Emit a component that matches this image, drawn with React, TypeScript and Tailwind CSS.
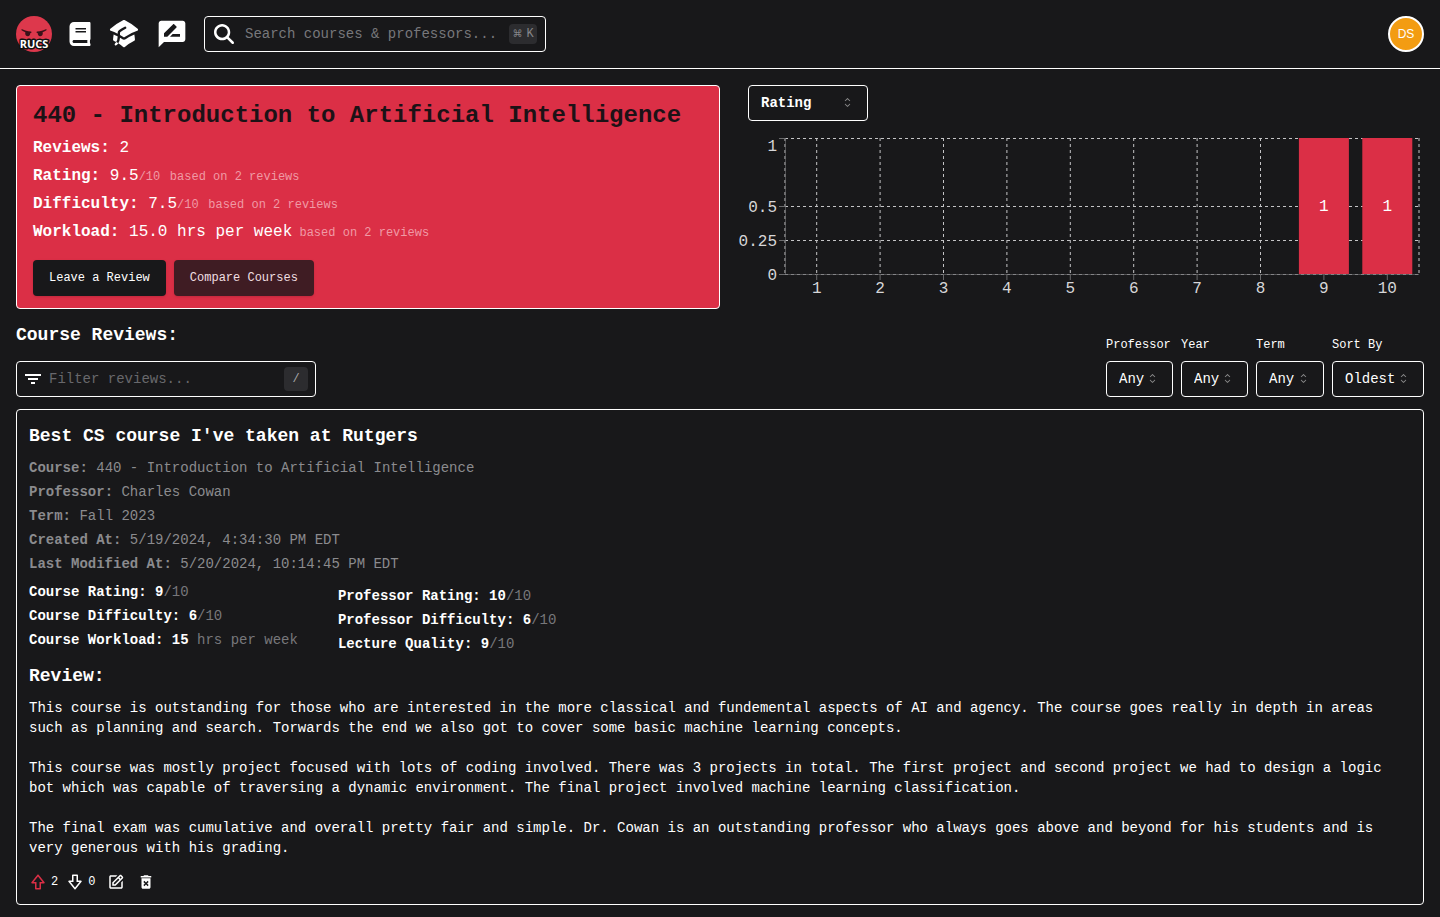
import type { ReactNode } from "react";
import { BiDownvote, BiEdit, BiFilter, BiUpvote } from "react-icons/bi";
import { FaBook } from "react-icons/fa";
import { FaMagnifyingGlass } from "react-icons/fa6";
import { HiMiniAcademicCap } from "react-icons/hi2";
import { MdDeleteForever, MdRateReview } from "react-icons/md";
import { RxCaretSort } from "react-icons/rx";

function Logo() {
  return (
    <svg viewBox="0 0 36 36" className="size-9" role="img" aria-label="RUCS home">
      <circle cx="18" cy="18" r="18" fill="#dd384c" />
      <g fill="#3a1219">
        <path d="M6.2 13.200c2.200 1.300 5.400 2 8.600 2.200.8.100 1 .6.600 1.100-.3.400-.7.700-1.200.8.200 1.500-.8 2.900-2.300 2.900s-2.800-1.300-2.700-3c0-.3.100-.6.200-.9-1.500-.5-2.900-1.200-3.800-2-.6-.6 0-1.400.6-1.100z" />
        <path d="M29.800 13.200c-2.200 1.300-5.400 2-8.600 2.200-.8.100-1 .6-.6 1.100.3.400.7.700 1.200.8-.2 1.500.8 2.900 2.300 2.900s2.800-1.300 2.700-3c0-.3-.1-.6-.2-.9 1.500-.5 2.900-1.200 3.800-2 .6-.6 0-1.400-.6-1.100z" />
      </g>
      <text
        x="18"
        y="32"
        textAnchor="middle"
        className="font-['Liberation_Sans_Narrow','Open_Sans',sans-serif] text-[11px] font-bold"
        fill="#fff"
        stroke="#111"
        strokeWidth="3"
        strokeLinejoin="round"
        paintOrder="stroke"
      >
        RUCS
      </text>
    </svg>
  );
}

function Header() {
  return (
    <header className="flex items-center justify-between border-b border-white p-4">
      <div className="flex items-center gap-4">
        <a href="#home">
          <Logo />
        </a>
        <a href="#courses" aria-label="Courses">
          <FaBook className="size-6" />
        </a>
        <a href="#professors" aria-label="Professors">
          <HiMiniAcademicCap className="size-8" />
        </a>
        <a href="#reviews" aria-label="Reviews">
          <MdRateReview className="size-8" />
        </a>
        <div className="flex h-9 w-[342px] items-center rounded border border-white pr-2 pl-[9px]">
          <FaMagnifyingGlass className="mr-[11px] size-5 shrink-0" />
          <input
            type="search"
            aria-label="Search courses and professors"
            placeholder="Search courses & professors..."
            className="min-w-0 flex-1 bg-transparent text-sm outline-none placeholder:text-[#77777b]"
          />
          <kbd className="flex h-5 w-7 shrink-0 items-center justify-center gap-1 rounded bg-[#2c2c2f] text-xs text-[#86868a]">
            <span className="font-['DejaVu_Sans',sans-serif] text-[10px]">⌘</span>K
          </kbd>
        </div>
      </div>
      <button
        type="button"
        aria-label="Account"
        className="flex size-9 items-center justify-center rounded-full border-2 border-white bg-[#f39c12] font-['Liberation_Sans',sans-serif] text-xs text-white"
      >
        DS
      </button>
    </header>
  );
}

function Stat({ label, value, outOf, note }: { label: string; value: string; outOf?: string; note?: string }) {
  return (
    <p className="leading-7">
      <b>{label}:</b> {value}
      {outOf && <span className="text-xs text-[#f09aa5]">/{outOf}</span>}
      {outOf && " "}
      {note && (
        <span className="text-xs text-[#f09aa5]">
          {!outOf && " "}
          {note}
        </span>
      )}
    </p>
  );
}

function CourseCard() {
  return (
    <section className="rounded border border-white bg-[#db2f46] px-4 py-3">
      <h1 className="text-2xl leading-9 font-bold text-[#1c1216]">440 - Introduction to Artificial Intelligence</h1>
      <Stat label="Reviews" value="2" />
      <Stat label="Rating" value="9.5" outOf="10" note="based on 2 reviews" />
      <Stat label="Difficulty" value="7.5" outOf="10" note="based on 2 reviews" />
      <Stat label="Workload" value="15.0 hrs per week" note="based on 2 reviews" />
      <div className="mt-3.5 flex gap-2 text-xs">
        <button type="button" className="h-9 rounded bg-[#18181a] px-4 shadow">
          Leave a Review
        </button>
        <button type="button" className="h-9 rounded bg-[#3f1c23] px-4 text-[#f0dfe1] shadow">
          Compare Courses
        </button>
      </div>
    </section>
  );
}

function Picker({ id, value, className, label }: { id: string; value: string; className: string; label?: string }) {
  return (
    <div className="relative w-fit">
      <select
        id={id}
        aria-label={label}
        className={`h-9 appearance-none rounded border border-white bg-[#18181a] pl-3 text-sm outline-none ${className}`}
      >
        <option>{value}</option>
      </select>
      <RxCaretSort className="pointer-events-none absolute top-2.5 right-[13px] size-[15px] opacity-50" />
    </div>
  );
}

const PLOT = { left: 65, right: 699, top: 9, bottom: 145 };
const TICKS = [
  { value: "1", y: 9, textY: 22 },
  { value: "0.5", y: 77, textY: 83 },
  { value: "0.25", y: 111, textY: 117 },
  { value: "0", y: 145, textY: 151 },
];
const COUNTS = [0, 0, 0, 0, 0, 0, 0, 0, 1, 1];

function RatingChart() {
  const step = (PLOT.right - PLOT.left) / COUNTS.length;
  const center = (i: number) => PLOT.left + step * (i + 0.5);
  return (
    <svg viewBox="0 0 704 180" className="w-full text-base" role="img" aria-label="Rating distribution">
      <g stroke="#c4c4c6" strokeDasharray="3 3">
        {TICKS.map((t) => (
          <line key={t.value} x1={PLOT.left} x2={PLOT.right} y1={t.y + 0.5} y2={t.y + 0.5} />
        ))}
        {COUNTS.map((_, i) => (
          <line key={i} x1={center(i)} x2={center(i)} y1={PLOT.top} y2={PLOT.bottom} />
        ))}
        <line x1={PLOT.left} x2={PLOT.left} y1={PLOT.top} y2={PLOT.bottom} />
        <line x1={PLOT.right} x2={PLOT.right} y1={PLOT.top} y2={PLOT.bottom} />
      </g>
      <g stroke="#6a6a6c">
        <line x1={PLOT.left + 0.5} x2={PLOT.left + 0.5} y1={PLOT.top} y2={PLOT.bottom} strokeOpacity="0.7" />
        <line x1={PLOT.left} x2={PLOT.right} y1={PLOT.bottom + 0.5} y2={PLOT.bottom + 0.5} strokeOpacity="0.7" />
        {TICKS.map((t) => (
          <line key={t.value} x1={PLOT.left - 6} x2={PLOT.left} y1={t.y + 0.5} y2={t.y + 0.5} />
        ))}
        {COUNTS.map((_, i) => (
          <line key={i} x1={center(i)} x2={center(i)} y1={PLOT.bottom} y2={PLOT.bottom + 6} />
        ))}
      </g>
      {COUNTS.map((n, i) =>
        n > 0 ? (
          <g key={i}>
            <rect x={center(i) - 25} y={PLOT.top} width="50" height={PLOT.bottom - PLOT.top} fill="#db2f46" />
            <text x={center(i)} y="82" textAnchor="middle" fill="#fff">
              {n}
            </text>
          </g>
        ) : null,
      )}
      <g fill="#d6d6d8">
        {TICKS.map((t) => (
          <text key={t.value} x="57" y={t.textY} textAnchor="end">
            {t.value}
          </text>
        ))}
        {COUNTS.map((_, i) => (
          <text key={i} x={center(i)} y="164" textAnchor="middle">
            {i + 1}
          </text>
        ))}
      </g>
    </svg>
  );
}

const FILTERS = [
  { id: "professor", label: "Professor", value: "Any", width: "w-[67px]" },
  { id: "year", label: "Year", value: "Any", width: "w-[67px]" },
  { id: "term", label: "Term", value: "Any", width: "w-[68px]" },
  { id: "sort", label: "Sort By", value: "Oldest", width: "w-[92px]" },
];

function ReviewFilters() {
  return (
    <div className="mt-3 flex items-end justify-between">
      <div>
        <h2 className="mb-3 text-lg leading-7 font-bold">Course Reviews:</h2>
        <div className="flex h-9 w-[300px] items-center rounded border border-white pr-[7px] pl-1">
          <BiFilter className="mr-1 size-6 shrink-0" />
          <input
            type="search"
            aria-label="Filter reviews"
            placeholder="Filter reviews..."
            className="min-w-0 flex-1 bg-transparent text-sm outline-none placeholder:text-[#68686c]"
          />
          <kbd className="flex size-6 shrink-0 items-center justify-center rounded bg-[#2c2c2f] text-xs text-[#a6a6aa]">
            /
          </kbd>
        </div>
      </div>
      <div className="flex gap-2">
        {FILTERS.map((f) => (
          <div key={f.id}>
            <label htmlFor={f.id} className="mb-2 block text-xs">
              {f.label}
            </label>
            <Picker id={f.id} value={f.value} className={f.width} />
          </div>
        ))}
      </div>
    </div>
  );
}

function Score({ label, value, suffix }: { label: string; value: string; suffix: ReactNode }) {
  return (
    <p className="leading-6">
      <b>{label}:</b> <span className="font-bold">{value}</span>
      <span className="text-[#77777a]">{suffix}</span>
    </p>
  );
}

const META = [
  ["Course", "440 - Introduction to Artificial Intelligence"],
  ["Professor", "Charles Cowan"],
  ["Term", "Fall 2023"],
  ["Created At", "5/19/2024, 4:34:30 PM EDT"],
  ["Last Modified At", "5/20/2024, 10:14:45 PM EDT"],
];

const PARAGRAPHS = [
  "This course is outstanding for those who are interested in the more classical and fundemental aspects of AI and agency. The course goes really in depth in areas such as planning and search. Torwards the end we also got to cover some basic machine learning concepts.",
  "This course was mostly project focused with lots of coding involved. There was 3 projects in total. The first project and second project we had to design a logic bot which was capable of traversing a dynamic environment. The final project involved machine learning classification.",
  "The final exam was cumulative and overall pretty fair and simple. Dr. Cowan is an outstanding professor who always goes above and beyond for his students and is very generous with his grading.",
];

function Review() {
  return (
    <article className="mt-3 rounded border border-white px-3 pt-3 pb-2.5 text-sm">
      <h3 className="text-lg leading-7 font-bold">Best CS course I've taken at Rutgers</h3>
      <div className="mt-1.5 leading-6 text-[#8b8b8e]">
        {META.map(([label, value]) => (
          <p key={label}>
            <b>{label}:</b> {value}
          </p>
        ))}
      </div>
      <div className="flex gap-10">
        <div className="mt-1">
          <Score label="Course Rating" value="9" suffix="/10" />
          <Score label="Course Difficulty" value="6" suffix="/10" />
          <Score label="Course Workload" value="15" suffix=" hrs per week" />
        </div>
        <div className="mt-2">
          <Score label="Professor Rating" value="10" suffix="/10" />
          <Score label="Professor Difficulty" value="6" suffix="/10" />
          <Score label="Lecture Quality" value="9" suffix="/10" />
        </div>
      </div>
      <h4 className="mt-1.5 text-lg leading-7 font-bold">Review:</h4>
      <div className="mt-2 flex flex-col gap-5 leading-5">
        {PARAGRAPHS.map((text) => (
          <p key={text}>{text}</p>
        ))}
      </div>
      <div className="mt-3 flex h-6 items-center gap-3 text-xs">
        <div className="flex items-center gap-2">
          <button type="button" aria-label="Upvote" className="flex items-center gap-1">
            <BiUpvote className="size-[18px] text-[#db2f46]" />2
          </button>
          <button type="button" aria-label="Downvote" className="flex items-center gap-1">
            <BiDownvote className="size-[18px]" />0
          </button>
        </div>
        <button type="button" aria-label="Edit review">
          <BiEdit className="size-[18px]" />
        </button>
        <button type="button" aria-label="Delete review">
          <MdDeleteForever className="size-[18px]" />
        </button>
      </div>
    </article>
  );
}

export default function App() {
  return (
    <div className="min-h-screen bg-[#18181a] font-['Liberation_Mono',monospace] text-white">
      <Header />
      <main className="px-4 pt-4 pb-3">
        <div className="grid grid-cols-2">
          <CourseCard />
          <section className="flex flex-col gap-2">
            <div className="pl-7">
              <Picker id="metric" label="Chart metric" value="Rating" className="w-[120px] font-bold" />
            </div>
            <RatingChart />
          </section>
        </div>
        <ReviewFilters />
        <Review />
      </main>
    </div>
  );
}
